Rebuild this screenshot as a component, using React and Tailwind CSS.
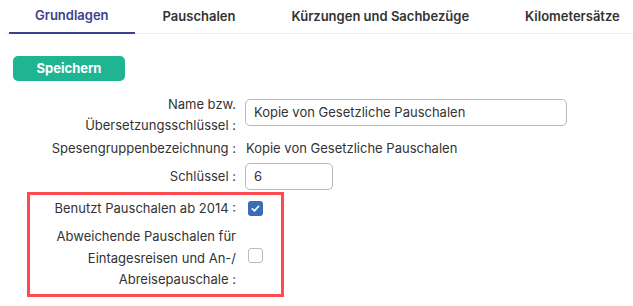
import React from 'react';

const tabs = ['Grundlagen', 'Pauschalen', 'Kürzungen und Sachbezüge', 'Kilometersätze'];

const Check = ({ checked }) =>
  checked ? (
    <span className="flex h-[15px] w-[15px] items-center justify-center rounded-[3px] bg-[#3a6db5]">
      <svg width="11" height="11" viewBox="0 0 12 12" fill="none">
        <path d="M2.5 6.3l2.3 2.3 4.7-5" stroke="#fff" strokeWidth="1.8" strokeLinecap="round" strokeLinejoin="round" />
      </svg>
    </span>
  ) : (
    <span className="block h-[15px] w-[15px] rounded-[3px] border border-[#b9bcc2] bg-white" />
  );

const App = () => {
  return (
    <div className="h-[306px] w-[633px] overflow-hidden bg-white text-[13px] text-[#333] font-['Inter',sans-serif]">
      <div className="ml-[5px] flex border-b border-[#eceef3]">
        {tabs.map((t, i) => (
          <div
            key={t}
            className={
              i === 0
                ? 'ml-[4px] -mb-px flex h-[34px] shrink-0 items-center whitespace-nowrap border-b-2 border-[#3d4190] px-[26px] font-semibold text-[#3d4190]'
                : 'flex h-[33px] shrink-0 items-center whitespace-nowrap px-[28px] font-semibold text-[#333]'
            }
          >
            {t}
          </div>
        ))}
      </div>

      <button className="ml-[13px] mt-[22px] h-[25px] w-[112px] rounded-[5px] bg-[#20b592] text-[13px] font-bold text-white">
        Speichern
      </button>

      <div className="mt-[13px]">
        <div className="flex">
          <div className="w-[236px] text-right leading-[21px]">
            Name bzw.
            <br />
            Übersetzungsschlüssel :
          </div>
          <div className="ml-[9px] mt-[5px] flex h-[27px] w-[322px] items-center rounded-[5px] border border-[#b4b7bd] px-[8px]">
            Kopie von Gesetzliche Pauschalen
          </div>
        </div>

        <div className="mt-[2px] flex leading-[21px]">
          <div className="w-[236px] text-right">Spesengruppenbezeichnung :</div>
          <div className="ml-[10px]">Kopie von Gesetzliche Pauschalen</div>
        </div>

        <div className="mt-[4px] flex items-center">
          <div className="w-[236px] text-right">Schlüssel :</div>
          <div className="ml-[9px] flex h-[27px] w-[88px] items-center rounded-[5px] border border-[#b4b7bd] px-[8px]">
            6
          </div>
        </div>

        <div className="ml-[27px] mt-[2px] w-[257px] border-[3px] border-[#ff4a4f] pb-[3px]">
          <div className="mt-[3px] flex items-center leading-[21px]">
            <div className="w-[206px] text-right">Benutzt Pauschalen ab 2014 :</div>
            <div className="ml-[12px]">
              <Check checked />
            </div>
          </div>
          <div className="mt-[7px] flex items-center leading-[21.5px]">
            <div className="w-[206px] text-right">
              Abweichende Pauschalen für
              <br />
              Eintagesreisen und An-/
              <br />
              Abreisepauschale :
            </div>
            <div className="ml-[12px] -mt-[5px]">
              <Check />
            </div>
          </div>
        </div>
      </div>
    </div>
  );
};

export default App;
